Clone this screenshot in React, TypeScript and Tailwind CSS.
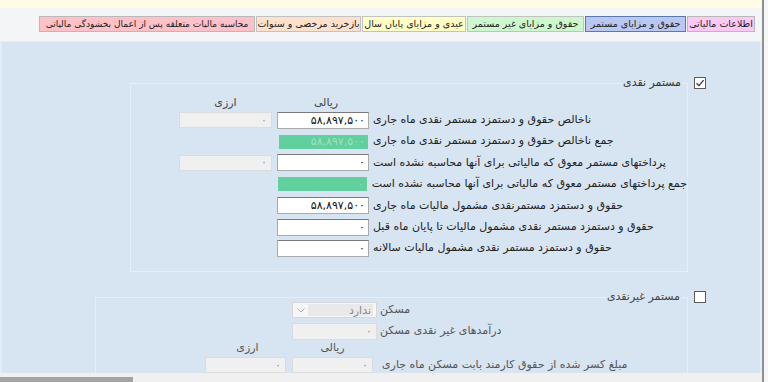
import React from "react"

const font = { fontFamily: '"DejaVu Sans", sans-serif' }

const tabs = [
  { label: "اطلاعات مالیاتی", w: "w-[68px]", cls: "bg-[#fcc8f4] border-[#b9b9b9] text-[9.5px]" },
  { label: "حقوق و مزایای مستمر", w: "w-[101px]", cls: "bg-[#b8c8f2] border-[#5a78a8] text-[9.5px]" },
  { label: "حقوق و مزایای غیر مستمر", w: "w-[117px]", cls: "bg-[#cdf7cd] border-[#c2c2c2] text-[9.5px]" },
  { label: "عیدی و مزایای پایان سال", w: "w-[104px]", cls: "bg-[#ffffc6] border-[#c2c2c2] text-[9.5px]" },
  { label: "بازخرید مرخصی و سنوات", w: "w-[105px]", cls: "bg-[#fde1cc] border-[#c2c2c2] text-[9.5px]" },
  { label: "محاسبه مالیات متعلقه پس از اعمال بخشودگی مالیاتی", w: "w-[216px]", cls: "bg-[#ffc1c8] border-[#b9b9b9] text-[9px]" },
]

type Row = {
  label: string
  rial: string
  kind: "white" | "green"
  arzi?: boolean
}

const rows: Row[] = [
  { label: "ناخالص حقوق و دستمزد مستمر نقدی ماه جاری", rial: "۵۸,۸۹۷,۵۰۰", kind: "white", arzi: true },
  { label: "جمع ناخالص حقوق و دستمزد مستمر نقدی ماه جاری", rial: "۵۸,۸۹۷,۵۰۰", kind: "green" },
  { label: "پرداختهای مستمر معوق که مالیاتی برای آنها محاسبه نشده است", rial: "۰", kind: "white", arzi: true },
  { label: "جمع پرداختهای مستمر معوق که مالیاتی برای آنها محاسبه نشده است", rial: "۰", kind: "green" },
  { label: "حقوق و دستمزد مستمرنقدی مشمول مالیات ماه جاری", rial: "۵۸,۸۹۷,۵۰۰", kind: "white" },
  { label: "حقوق و دستمزد مستمر نقدی مشمول مالیات تا پایان ماه قبل", rial: "۰", kind: "white" },
  { label: "حقوق و دستمزد مستمر نقدی مشمول مالیات سالانه", rial: "۰", kind: "white" },
]

const CheckBox: React.FC<{ checked?: boolean }> = ({ checked }) => (
  <div className="flex h-[12px] w-[12px] items-center justify-center border border-[#5c5c5c] bg-white">
    {checked && (
      <svg width="10" height="10" viewBox="0 0 10 10">
        <path d="M1.5 5.2 L4 7.6 L8.6 2.2" fill="none" stroke="#333" strokeWidth="1.3" />
      </svg>
    )}
  </div>
)

const GrayBox: React.FC<{ w: string; h?: string }> = ({ w, h = "h-[16px]" }) => (
  <div
    className={`${w} ${h} flex items-center justify-end border border-[#dcdcdc] bg-[#f0f0f0] pr-[4px] text-[11px] leading-none text-[#8c8c8c]`}
  >
    ۰
  </div>
)

export default function App() {
  return (
    <div className="flex h-[382px] w-[768px] overflow-hidden bg-[#f4f5f7] text-[11px]" style={font}>
      <div className="flex w-[762px] flex-col">
        {/* top strip */}
        <div className="h-[8px] bg-[#fffbe4]" />

        {/* tabs */}
        <div dir="rtl" className="flex h-[33px] gap-[1px] pr-[7px] pt-[8px]">
          {tabs.map((t, i) => (
            <div
              key={i}
              className={`${t.w} ${t.cls} flex h-[16px] items-center justify-center overflow-hidden whitespace-nowrap border leading-none text-[#222]`}
            >
              {t.label}
            </div>
          ))}
        </div>

        {/* main panel */}
        <div className="flex h-[332px] flex-col overflow-hidden border-l-[2px] border-r-[2px] border-t border-[#e4ecf6] bg-[#d7e4f1]">
          {/* section 1 */}
          <div className="ml-[128px] mt-[35px] flex w-[576px] flex-col">
            <div className="relative z-10 flex h-[12px] items-center justify-end gap-[12px]">
              <span dir="rtl" className="bg-[#d7e4f1] px-[1px] text-[#333]">
                مستمر نقدی
              </span>
              <CheckBox checked />
            </div>
            <div className="mt-[-6px] flex h-[189px] w-[558px] flex-col border border-[#e6eef7] pl-[48px] pt-[12px]">
              <div className="flex h-[13.5px] items-center">
                <div className="w-[93px] text-center text-[#444]">ارزی</div>
                <div className="ml-[6px] w-[92px] pl-[4px] text-center text-[#444]">ریالی</div>
              </div>
              {rows.map((r, i) => (
                <div key={i} className="flex h-[21.4px] items-center">
                  {r.arzi ? <GrayBox w="w-[93px]" /> : <div className="w-[93px]" />}
                  {r.kind === "white" ? (
                    <div className="ml-[5px] flex h-[17px] w-[92px] items-center justify-end border border-[#ababab] border-t-[#7a7a7a] bg-white pr-[3px] leading-none text-[#111]">
                      {r.rial}
                    </div>
                  ) : (
                    <div className="ml-[7px] mr-[1px] flex h-[14px] w-[89px] items-center justify-end bg-[#62cf9f] pr-[3px] leading-none text-[#9ee0c0]">
                      {r.rial}
                    </div>
                  )}
                  <span dir="rtl" className="ml-[4px] whitespace-nowrap text-[#222]">
                    {r.label}
                  </span>
                </div>
              ))}
            </div>
          </div>

          {/* section 2 */}
          <div className="ml-[93px] mt-[19px] flex w-[611px] flex-col">
            <div className="relative z-10 flex h-[12px] items-center justify-end gap-[13px]">
              <span dir="rtl" className="bg-[#d7e4f1] px-[1px] text-[#444]">
                مستمر غیرنقدی
              </span>
              <CheckBox />
            </div>
            <div className="mt-[-6px] flex h-[120px] w-[593px] flex-col border border-[#e6eef7] pl-[109px] pt-[4px]">
              <div className="flex h-[16px] items-center">
                <div className="w-[87px]" />
                <div className="flex h-[16px] w-[85px] items-stretch border border-[#d6d6d6] bg-[#f6f6f6]">
                  <div className="flex w-[15px] items-center justify-center">
                    <svg width="8" height="5" viewBox="0 0 8 5">
                      <path d="M0.5 0.5 L4 4 L7.5 0.5" fill="none" stroke="#a8a8a8" strokeWidth="1" />
                    </svg>
                  </div>
                  <div className="my-[1px] mr-[3px] flex flex-1 items-center justify-end bg-[#e9e9e9] pr-[2px] leading-none text-[#8a8a8a]">
                    <span dir="rtl">ندارد</span>
                  </div>
                </div>
                <span dir="rtl" className="ml-[3px] text-[#555]">مسکن</span>
              </div>
              <div className="mt-[5px] flex h-[17px] items-center">
                <div className="w-[87px]" />
                <GrayBox w="w-[85px]" h="h-[17px]" />
                <span dir="rtl" className="ml-[3px] whitespace-nowrap text-[#555]">
                  درآمدهای غیر نقدی مسکن
                </span>
              </div>
              <div className="flex h-[17px] items-center">
                <div className="w-[81px] pl-[4px] text-center text-[#555]">ارزی</div>
                <div className="ml-[6px] w-[81px] text-center text-[#555]">ریالی</div>
              </div>
              <div className="flex h-[16px] items-center">
                <GrayBox w="w-[81px]" />
                <div className="ml-[6px]">
                  <GrayBox w="w-[81px]" />
                </div>
                <span dir="rtl" className="ml-[9px] whitespace-nowrap text-[#555]">
                  مبلغ کسر شده از حقوق کارمند بابت مسکن ماه جاری
                </span>
              </div>
            </div>
          </div>
        </div>

        {/* bottom scrollbar strip */}
        <div className="flex h-[9px] flex-col bg-[#f0f0f0]">
          <div className="h-[4px]" />
          <div className="h-[5px] w-[133px] bg-[#a3a3a3]" />
        </div>
      </div>
      <div className="w-[2px] bg-[#8f8f8f]" />
      <div className="flex-1 bg-[#f6f6f6]" />
    </div>
  )
}
